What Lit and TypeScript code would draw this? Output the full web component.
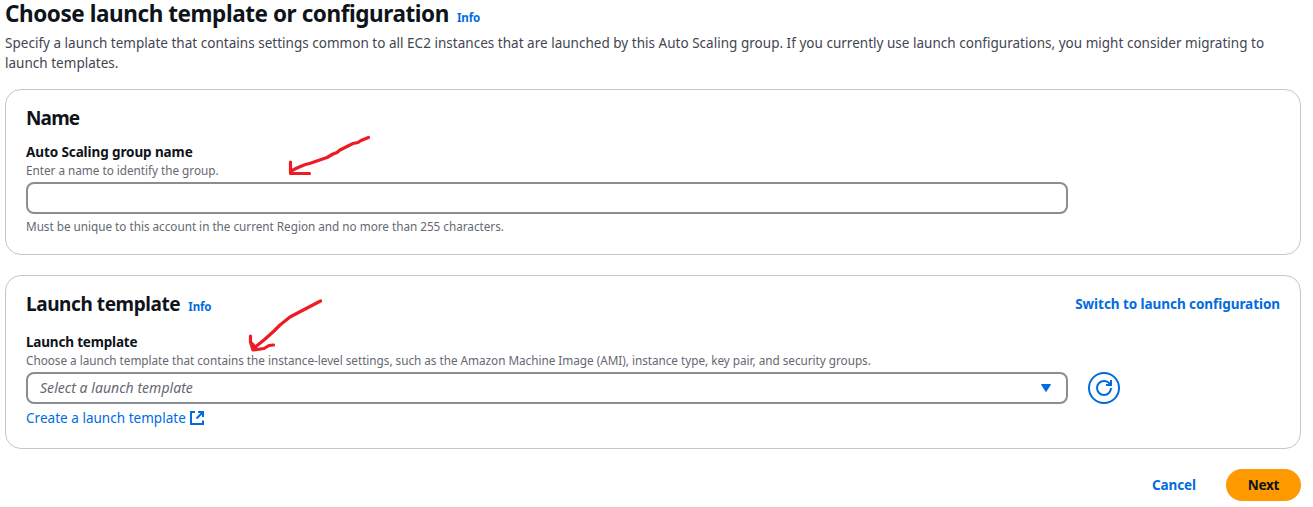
import { LitElement, html, css } from "lit";
import { customElement } from "lit/decorators.js";

@customElement("app-root")
export class AppRoot extends LitElement {
  static styles = css`
    :host { display: block; position: relative; width: 1313px; height: 507px; background: #fff; color: #0f141a; font-family: "Noto Sans", "Open Sans", sans-serif; font-size: 14px; line-height: 20px; box-sizing: border-box; padding: 0 12px 0 5px; }
    * { box-sizing: border-box; }
    h1, h2, p { margin: 0; white-space: nowrap; }
    a { color: #006ce0; text-decoration: none; white-space: nowrap; }
    .heading { display: flex; align-items: baseline; height: 33px; }
    h1 { font-size: 22.5px; line-height: 27px; font-weight: 700; letter-spacing: -0.43px; }
    .info { font-size: 11.5px; font-weight: 700; margin-left: 8px; letter-spacing: -0.1px; }
    .description { color: #424650; font-size: 13.5px; height: 40px; letter-spacing: 0.02px; }
    .card { display: flex; flex-direction: column; border: 1px solid #c6c6cd; border-radius: 16px; padding: 16px 20px 0; }
    .name-card { margin-top: 16px; height: 166px; }
    .template-card { margin-top: 20px; height: 174px; }
    .card-head { display: flex; justify-content: space-between; height: 36px; }
    .template-card .card-head { height: 40px; }
    .title { display: flex; align-items: baseline; }
    h2 { font-size: 19px; line-height: 24px; font-weight: 700; letter-spacing: -0.42px; }
    .name-card h2 { letter-spacing: -0.85px; }
    .switch { font-weight: 700; font-size: 13.5px; line-height: 24px; letter-spacing: -0.06px; }
    .label { font-weight: 700; font-size: 13.5px; height: 20px; letter-spacing: -0.1px; }
    .template-card .label { letter-spacing: -0.18px; }
    .hint { color: #656871; font-size: 11.75px; line-height: 16px; height: 20px; letter-spacing: -0.025px; }
    .field { width: 1042px; height: 32px; border: 2px solid #8c8c94; border-radius: 8px; background: #fff; }
    .constraint { margin-top: 4px; }
    .row { display: flex; gap: 20px; }
    .select { display: flex; align-items: center; justify-content: space-between; padding: 0 15px 0 12px; color: #656871; font-style: italic; letter-spacing: 0.04px; }
    .refresh { width: 32px; height: 32px; border: 2px solid #006ce0; border-radius: 50%; background: #fff; padding: 0; display: grid; place-items: center; }
    .create { display: flex; gap: 4px; align-items: center; height: 20px; margin-top: 4px; font-size: 13.5px; letter-spacing: 0.03px; }
    .actions { display: flex; justify-content: flex-end; align-items: center; gap: 30px; margin-top: 20px; height: 32px; font-weight: 700; font-size: 13.5px; letter-spacing: -0.1px; }
    .next { width: 75px; height: 32px; border: 0; border-radius: 16px; background: #ff9900; color: #0f141a; font: inherit; letter-spacing: -0.25px; padding: 0; }
    .marks { position: absolute; left: 0; top: 0; pointer-events: none; }
    svg { display: block; }
  `;

  render() {
    return html`
      <header>
        <div class="heading"><h1>Choose launch template or configuration</h1><a class="info">Info</a></div>
        <p class="description">Specify a launch template that contains settings common to all EC2 instances that are launched by this Auto Scaling group. If you currently use launch configurations, you might consider migrating to<br />launch templates.</p>
      </header>
      <section class="card name-card">
        <div class="card-head"><h2>Name</h2></div>
        <div class="label">Auto Scaling group name</div>
        <p class="hint">Enter a name to identify the group.</p>
        <div class="field"></div>
        <p class="hint constraint">Must be unique to this account in the current Region and no more than 255 characters.</p>
      </section>
      <section class="card template-card">
        <div class="card-head">
          <div class="title"><h2>Launch template</h2><a class="info">Info</a></div>
          <a class="switch">Switch to launch configuration</a>
        </div>
        <div class="label">Launch template</div>
        <p class="hint">Choose a launch template that contains the instance-level settings, such as the Amazon Machine Image (AMI), instance type, key pair, and security groups.</p>
        <div class="row">
          <div class="field select"><span>Select a launch template</span>
            <svg width="10" height="8" viewBox="0 0 10 8"><path d="M.5 .5h9L5 7.5z" fill="#006ce0" stroke="#006ce0" stroke-linejoin="round" /></svg>
          </div>
          <button class="refresh" aria-label="Refresh">
            <svg width="16" height="16" viewBox="0 0 16 16" fill="none" stroke="#006ce0" stroke-width="2"><path d="M15 8c0 3.87-3.13 7-7 7s-7-3.13-7-7 3.13-7 7-7c2.79 0 5.2 1.63 6.33 4" /><path d="M10 5h5V0" /></svg>
          </button>
        </div>
        <a class="create"><span>Create a launch template</span>
          <svg width="14" height="14" viewBox="0 0 14 14" fill="none" stroke="#006ce0" stroke-width="2"><path d="M5 1H1v12h12V9.500M8 1h5v5M13 1L6.500 7.500" /></svg>
        </a>
      </section>
      <footer class="actions"><a class="cancel">Cancel</a><button class="next">Next</button></footer>
      <svg class="marks" width="1313" height="507" viewBox="0 0 1313 507" fill="none" stroke="#ed1c24" stroke-width="3.2" stroke-linecap="round" stroke-linejoin="round">
        <path d="M368.500 137.500L361 140.500L358 142.500L353 143.500L340 150L337 152.500L333 154L327 157.500L311 163L304 165L297 168L291 171M290.500 162V173.500H309.500" />
        <path d="M320.500 301L309 307L290 317L280 325L274 331L264 340L254 348M250.500 336V342L253 350L264 348.500L269 345.500L273.500 345M250.500 342L255 347" />
      </svg>
    `;
  }
}
